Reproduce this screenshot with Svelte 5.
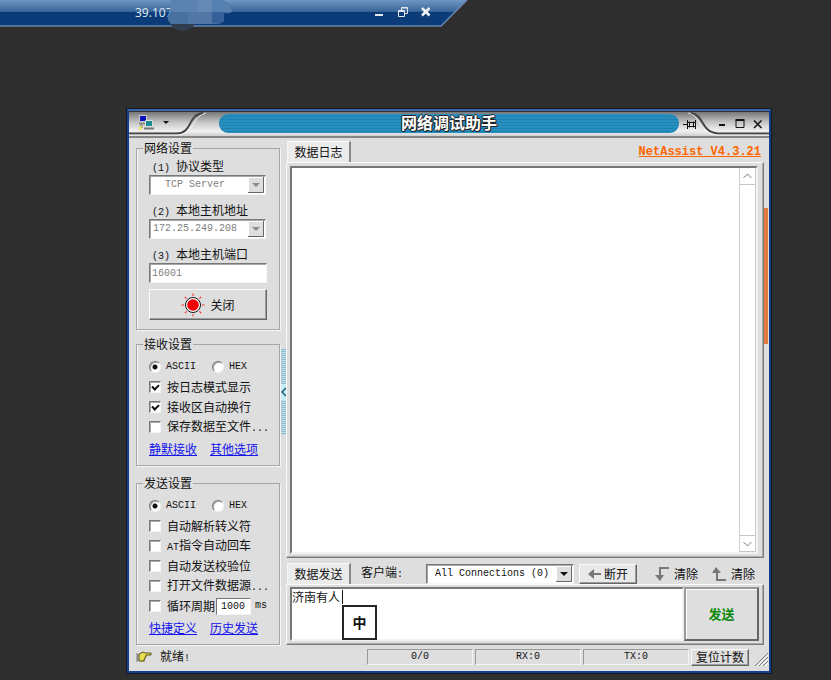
<script>
  let proto = $state('tcp-server');
  let host = $state('local');
  let port = $state('16001');
  let recvMode = $state('ASCII');
  let sendMode = $state('ASCII');
  let period = $state('1000');
  let log = $state('');
  let message = $state('济南有人');
  let recvOptions = $state([
    { label: '按日志模式显示', on: true },
    { label: '接收区自动换行', on: true },
    { label: '保存数据至文件', more: true, on: false }
  ]);
  let sendOptions = $state([
    { label: '自动解析转义符', on: false },
    { prefix: 'AT', label: '指令自动回车', on: false },
    { label: '自动发送校验位', on: false },
    { label: '打开文件数据源', more: true, on: false }
  ]);
  let loop = $state(false);
  const counters = ['0/0', 'RX:0', 'TX:0'];
  const rays = [0, 45, 90, 135, 180, 225, 270, 315];
</script>

{#snippet modes(name, value, pick)}
  <div class="row">
    <label class="radio"><input type="radio" {name} checked={value === 'ASCII'} onchange={() => pick('ASCII')} /><span class="m">ASCII</span></label>
    <label class="radio"><input type="radio" {name} checked={value === 'HEX'} onchange={() => pick('HEX')} /><span class="m">HEX</span></label>
  </div>
{/snippet}

{#snippet checks(items)}
  {#each items as item}
    <label class="row"><input type="checkbox" bind:checked={item.on} /><span>{#if item.prefix}<span class="m">{item.prefix}</span>{/if}{item.label}{#if item.more}<span class="m">...</span>{/if}</span></label>
  {/each}
{/snippet}

{#snippet arrow()}
  <svg class="drop" width="16" height="16" viewBox="0 0 16 16" aria-hidden="true">
    <path class="face" d="M0 0h16v16H0z" /><path class="lo" d="M15.500 0V15.500H0" /><path class="hi" d="M.5 15V.5H15" />
    <path class="tri" d="M4 6h8l-4 4z" />
  </svg>
{/snippet}

<div class="desktop">
  <header class="remote">
    <svg class="shape" width="468" height="30" viewBox="0 0 468 30" aria-hidden="true">
      <defs>
        <linearGradient id="glass" x1="0" y1="0" x2="0" y2="1">
          <stop offset="0" stop-color="#6f97c4" /><stop offset="1" stop-color="#366497" />
        </linearGradient>
      </defs>
      <path d="M0 0H467L441 26H0z" fill="#0b3b78" />
      <path d="M0 0H467L455 12H0z" fill="url(#glass)" />
      <path d="M467 0L441 26H0" fill="none" stroke="#6687ad" stroke-width="1.500" />
    </svg>
    <span class="addr">39.107</span>
    <svg class="smudge" width="70" height="32" viewBox="0 0 70 32" aria-hidden="true">
      <path d="M3 23h26q-6 8-14 8q-9-1-12-8z" fill="#303d4f" />
      <path d="M4 0h52q7 4 9 9q2 5-8 4v7q-1 4-8 4H4q-7-6 0-13z" fill="#49719f" />
      <path d="M4 0h26v12H3z" fill="#5b82b0" /><path d="M30 0h15v12H30z" fill="#6489b4" />
      <path d="M21 12h24v12H21z" fill="#5277a5" /><path d="M45 0h11q7 4 9 12H45z" fill="#5580b0" />
      <path d="M45 12h12v8q-1 3-6 3h-6z" fill="#36609a" />
    </svg>
    <div class="remote-buttons">
      <button aria-label="最小化"><svg width="12" height="12"><path d="M2 9h8" stroke="#e4e9f0" stroke-width="2" /></svg></button>
      <button aria-label="还原"><svg width="12" height="12"><path d="M4.500 4V1.500H10.500V7.500H8M1.500 4.500h6v6h-6zM1.500 5.500h6M4.500 2h6" fill="none" stroke="#e4e9f0" /></svg></button>
      <button aria-label="关闭"><svg width="12" height="12"><path d="M1 2l7.500 7.500M8.500 2L1 9.500" stroke="#eef2f7" stroke-width="2.500" /></svg></button>
    </div>
  </header>

  <main class="window">
    <div class="titlebar">
      <svg class="cap" width="90" height="25" viewBox="0 0 90 25" aria-hidden="true">
        <path d="M0 21.500H48C64 21 58 3 74 1" fill="none" stroke="#444" stroke-width="2" />
        <path d="M0 23H49C66 22 62 5 77 1" fill="none" stroke="#fff" stroke-opacity=".7" />
        <path d="M10.500 3.500h7v6h-7z" fill="#0712b8" stroke="#ccc" /><path d="M10 11.500h6M12.500 12v4" stroke="#8d8d8d" stroke-width="2" />
        <path d="M16.500 8.500h7v6h-7z" fill="#188a91" stroke="#ddd" /><path d="M15 16.500h10" stroke="#777" stroke-width="2" />
        <path d="M13 14l-3 2h3l-3 3" fill="none" stroke="#eded2b" />
        <path d="M34 9h6l-3 3z" fill="#111" />
      </svg>
      <h1>网络调试助手</h1>
      <div class="cap caps">
        <svg class="curve" width="90" height="25" viewBox="0 0 90 25" aria-hidden="true">
          <path d="M12 1C26 3 21 20 39 21.500H90" fill="none" stroke="#444" stroke-width="2" />
          <path d="M9 1C23 4 18 21 38 23H90" fill="none" stroke="#fff" stroke-opacity=".7" />
        </svg>
        <button aria-label="置顶"><svg width="14" height="14"><path d="M0 7.500h4M4.500 3v9M12.500 3v9" stroke="#111" /><path d="M6.500 4.500v6M10.500 4.500v6M5 5.500h1.500h4H12M5 9.500h7" fill="none" stroke="#111" /></svg></button>
        <button class="first" aria-label="最小化"><svg width="12" height="14"><path d="M3 8h6" stroke="#111" stroke-width="2" /></svg></button>
        <button aria-label="最大化"><svg width="12" height="14"><path d="M2 3.500h8v7h-8z" fill="none" stroke="#111" /><path d="M1.500 3h9" stroke="#111" stroke-width="2" /></svg></button>
        <button aria-label="关闭"><svg width="12" height="14"><path d="M2 3.500l7.500 7.500M9.500 3.500L2 11" stroke="#111" stroke-width="1.500" /></svg></button>
      </div>
    </div>

    <div class="body">
      <aside>
        <fieldset>
          <legend>网络设置</legend>
          <label class="cap-label" for="proto"><span class="m num">(1)</span>协议类型</label>
          <div class="combo"><select id="proto" class="indent" bind:value={proto} disabled><option value="tcp-server">TCP Server</option></select>{@render arrow()}</div>
          <label class="cap-label" for="host"><span class="m num">(2)</span>本地主机地址</label>
          <div class="combo"><select id="host" bind:value={host} disabled><option value="local">172.25.249.208</option></select>{@render arrow()}</div>
          <label class="cap-label" for="port"><span class="m num">(3)</span>本地主机端口</label>
          <input id="port" class="port" bind:value={port} disabled />
          <button class="raised toggle">
            <svg width="24" height="24" viewBox="-12 -12 24 24" aria-hidden="true">
              {#each rays as a}<path d="M9 0h2.500" stroke="#f22" transform={`rotate(${a})`} />{/each}
              <circle r="7.500" fill="#fff" stroke="#111" /><circle r="5.800" fill="#f00000" />
            </svg>
            关闭
          </button>
        </fieldset>

        <fieldset class="opts">
          <legend>接收设置</legend>
          {@render modes('recv', recvMode, (v) => (recvMode = v))}
          {@render checks(recvOptions)}
          <div class="links"><a href="#quiet">静默接收</a><a href="#other">其他选项</a></div>
        </fieldset>

        <fieldset class="opts last">
          <legend>发送设置</legend>
          {@render modes('send', sendMode, (v) => (sendMode = v))}
          {@render checks(sendOptions)}
          <div class="row">
            <label class="loop"><input type="checkbox" bind:checked={loop} /><span>循环周期</span></label>
            <input class="period" aria-label="循环周期毫秒" bind:value={period} /><span class="m">ms</span>
          </div>
          <div class="links"><a href="#quick">快捷定义</a><a href="#history">历史发送</a></div>
        </fieldset>
      </aside>

      <div class="splitter"><button aria-label="收起侧栏"><svg width="6" height="16"><path d="M5 4L1 8l4 4" fill="none" stroke="#165a70" stroke-width="1.500" /></svg></button></div>

      <section class="work">
        <div class="tabs">
          <button class="tab">数据日志</button>
          <a class="brand" href="#about">NetAssist V4.3.21</a>
        </div>
        <div class="panel grow">
          <div class="sunken log">
            <textarea aria-label="数据日志" readonly bind:value={log}></textarea>
            <div class="scroll">
              <button aria-label="向上滚动"><svg width="9" height="6"><path d="M.5 5l4-4 4 4" fill="none" stroke="#777" /></svg></button>
              <button aria-label="向下滚动"><svg width="9" height="6"><path d="M.5 1l4 4 4-4" fill="none" stroke="#777" /></svg></button>
            </div>
          </div>
        </div>

        <div class="tabs send-tabs">
          <button class="tab">数据发送</button>
          <label class="client" for="client">客户端<span class="m">:</span></label>
          <div class="combo wide"><select id="client"><option>All Connections (0)</option></select>{@render arrow()}</div>
          <button class="raised cut"><svg width="14" height="10"><path d="M0 5l6-5v4h7v2H6v4z" fill="#777" /></svg>断开</button>
          <button class="flat"><svg width="16" height="16"><path d="M15 2H6V9" fill="none" stroke="#777" stroke-width="2" /><path d="M1 9h9l-4 6z" fill="#777" /></svg>清除</button>
          <button class="flat"><svg width="16" height="16"><path d="M15 14H6V7" fill="none" stroke="#777" stroke-width="2" /><path d="M1 7h9l-5-6z" fill="#777" /></svg>清除</button>
        </div>
        <div class="panel send">
          <div class="sunken editor">
            <textarea aria-label="发送内容" bind:value={message}></textarea>
            <i class="caret"></i>
            <div class="ime">中</div>
          </div>
          <button class="raised go">发送</button>
        </div>
      </section>

      <div class="edge"></div>
    </div>

    <footer>
      <div class="ready">
        <svg width="16" height="14" viewBox="0 0 16 14" aria-hidden="true"><path d="M3 4l4-2 2 1h6v2h-5v2H9v2H8v2H3z" fill="#e6df55" stroke="#55520f" /><path d="M1 3v9M2 4v7" stroke="#777" /><path d="M5 11h4" stroke="#8b8b28" /></svg>
        <span>就绪<span class="m">!</span></span>
      </div>
      {#each counters as c}<div class="cell m">{c}</div>{/each}
      <button class="raised reset">复位计数</button>
      <svg class="grip" width="14" height="14"><path d="M1 14L14 1M5 14l9-9M9 14l5-5" stroke="#777" /><path d="M3 14L14 3M7 14l7-7M11 14l3-3" stroke="#fff" /></svg>
    </footer>
  </main>
</div>

<style>
  :global(body) { background: #2e2e2e; }
  .desktop {
    min-height: 100vh; box-sizing: border-box; padding-bottom: 7px;
    display: flex; flex-direction: column; background: #2e2e2e; color: #111;
    font: 12px/14px "Noto Sans CJK SC", sans-serif;
  }
  .desktop :is(button, input, select, textarea) {
    font: inherit; color: inherit; margin: 0; padding: 0; border: 0; border-radius: 0;
    background: none; box-sizing: border-box; outline: none;
  }
  .desktop svg { display: block; flex: none; }
  .desktop .m, .desktop select, .desktop .port, .desktop .period { font-family: "Liberation Mono", monospace; font-size: 10px; }
  .num { margin: 0 6px 0 3px; }

  .remote { position: relative; height: 109px; width: 468px; box-sizing: border-box; padding-left: 135px; }
  .shape { position: absolute; left: 0; top: 0; }
  .addr { position: relative; color: #dfe5ee; font: 12px/26px "Noto Sans", sans-serif; }
  .smudge { position: absolute; left: 167px; top: 0; }
  .remote-buttons { position: absolute; left: 373px; top: 6px; display: flex; gap: 12px; }
  .remote-buttons button { height: 12px; }

  .window {
    flex: 1; margin: 0 60px 0 127px; display: flex; flex-direction: column;
    border: 2px solid #153f8c; border-top-color: #3c64a8; box-shadow: 0 0 0 1px #15181f;
    background: #dedede;
  }
  .titlebar {
    display: flex; height: 24px; border-top: 1px solid #333; border-bottom: 2px solid #858585;
    background: linear-gradient(#777, #c9c9c9 45%, #f1f1f1 80%, #cfcfcf);
  }
  .cap { flex: none; width: 90px; }
  h1 {
    flex: 1; margin: 2px 0 3px; border-radius: 9px; text-align: center; color: #fff;
    font: bold 16px/17px "Noto Sans CJK SC", sans-serif;
    text-shadow: 1px 0 #222, -1px 0 #222, 0 1px #222, 0 -1px #222, 1px 1px #222;
    background: repeating-linear-gradient(#278fc0 0 2px, #1f82b2 2px 3px);
  }
  .caps { position: relative; display: flex; align-items: center; justify-content: flex-end; gap: 6px; box-sizing: border-box; padding-right: 5px; }
  .caps button { position: relative; }
  .caps .first { margin-left: 13px; }
  .curve { position: absolute; left: 0; top: 0; }

  .body { flex: 1; display: flex; padding-top: 3px; }
  aside { flex: none; width: 144px; margin: 0 1px 0 7px; }
  fieldset { margin: 0 0 7px; padding: 0 12px 9px; border: 1px solid #a6a6a6; box-shadow: inset 1px 0 #f6f6f6, 1px 1px #f6f6f6; min-width: 0; }
  legend { margin-left: -6px; padding: 0 1px; line-height: 14px; }
  .opts { padding: 6px 0 4px 12px; margin-bottom: 10px; }
  .last { margin-bottom: 0; }
  .cap-label { display: block; line-height: 18px; height: 18px; margin-top: 6px; }
  legend + .cap-label { margin-top: 2px; }

  .combo { display: grid; width: 117px; height: 20px; box-sizing: border-box; border: 1px solid; border-color: #777 #f8f8f8 #f8f8f8 #777; box-shadow: inset 1px 1px #a8a8a8; background: #fff; align-items: center; }
  .combo > :global(*) { grid-area: 1 / 1; }
  .combo select { appearance: none; width: 100%; height: 18px; padding-left: 3px; color: #111; opacity: 1; }
  .combo select:disabled { color: #808080; }
  .combo .indent { padding-left: 15px; }
  .drop { justify-self: end; margin-right: 1px; pointer-events: none; }
  .face { fill: #dedede; }
  .lo { fill: none; stroke: #666; }
  .hi { fill: none; stroke: #fff; }
  .tri { fill: #111; }
  select:disabled + .drop .tri { fill: #8a8a8a; }
  .desktop .port { display: block; width: 118px; height: 20px; padding-left: 2px; color: #808080; background: #fff; border: 1px solid; border-color: #777 #f8f8f8 #f8f8f8 #777; box-shadow: inset 1px 1px #a8a8a8; }
  .desktop .raised { background: #dedede; border: 1px solid; border-color: #fafafa #666 #666 #fafafa; box-shadow: inset -1px -1px #9c9c9c; }
  .desktop .toggle { display: flex; align-items: center; justify-content: center; gap: 5px; width: 118px; height: 31px; margin-top: 6px; }

  .row { display: flex; align-items: center; height: 20px; white-space: nowrap; }
  .radio, .loop { display: flex; align-items: center; }
  .radio { width: 63px; flex: none; }
  .desktop input[type='radio'], .desktop input[type='checkbox'] { appearance: none; flex: none; width: 12px; height: 12px; border: 1px solid; border-color: #777 #f4f4f4 #f4f4f4 #777; box-shadow: inset 1px 1px #aaa; background: #fff; margin-right: 6px; }
  .desktop input[type='radio'] { border-radius: 50%; margin-right: 5px; }
  .desktop input[type='radio']:checked { background: radial-gradient(circle, #111 0 2px, #fff 3px); }
  input[type='checkbox']:checked::before { content: ''; display: block; width: 7px; height: 5px; margin: 2px 0 0 2px; border: solid #111; border-width: 0 0 2px 2px; box-sizing: border-box; transform: rotate(-45deg); }
  .desktop .period { width: 35px; height: 17px; margin: 0 4px 0 1px; padding-left: 4px; background: #fff; border: 1px solid; border-color: #777 #f4f4f4 #f4f4f4 #777; }
  .links { display: flex; gap: 13px; line-height: 24px; height: 24px; }
  .links a { color: #1414ee; }

  .splitter { flex: none; width: 5px; height: 86px; margin-top: 208px; display: flex; align-items: center; background: repeating-linear-gradient(#8ebccb 0 1px, #c3e1ea 1px 2px); }
  .desktop .splitter button { background: #c5edf7; }

  .work { flex: 1; min-width: 0; display: flex; flex-direction: column; }
  .tabs { display: flex; height: 21px; padding-left: 1px; align-items: center; }
  .desktop .tab { height: 21px; width: 64px; background: #ebebeb; border: 1px solid #f8f8f8; border-right: 2px solid #888; border-bottom: 0; }
  .desktop .brand { margin-left: auto; margin-right: 3px; color: #f60; font: bold 12px/18px "Liberation Mono", monospace; text-decoration: underline; }
  .panel { display: flex; padding: 3px 5px 3px 3px; border: 1px solid; border-color: #fafafa #7b7b7b #7b7b7b #fafafa; box-shadow: inset -1px -1px #aaa; background: #dedede; }
  .grow { flex: 1; min-height: 0; }
  .sunken { display: flex; background: #fff; border: 2px solid; border-color: #777 #f2f2f2 #f2f2f2 #777; }
  .log { flex: 1; }
  .desktop textarea { flex: 1; min-width: 0; resize: none; background: #fff; }
  .scroll { width: 17px; display: flex; flex-direction: column; justify-content: space-between; border: solid #cdcdcd; border-width: 0 1px; box-sizing: border-box; background: #fff; }
  .desktop .scroll button { height: 17px; display: flex; align-items: center; justify-content: center; border-bottom: 1px solid #c7c7c7; }
  .desktop .scroll button:last-child { border-top: 1px solid #c7c7c7; }
  .send-tabs { margin-top: 5px; }
  .client { margin-left: 10px; flex: 1; white-space: nowrap; }
  .wide { width: 148px; }
  .wide select { padding-left: 8px; }
  .desktop .cut { display: flex; align-items: center; justify-content: center; gap: 2px; width: 58px; height: 20px; margin: 0 17px 0 5px; background: #e9e9e9; }
  .desktop .flat { display: flex; align-items: center; gap: 4px; margin-right: 13px; }
  .desktop .flat:last-child { margin-right: 9px; }
  .send { height: 54px; padding: 2px 4px 3px 3px; }
  .editor { flex: 1; position: relative; }
  .editor textarea { line-height: 16px; }
  .caret { position: absolute; left: 50px; top: 1px; width: 1px; height: 14px; background: #111; }
  .ime { position: absolute; left: 50px; top: 16px; width: 31px; height: 31px; border: 2px solid #262626; background: #fff; text-align: center; font-weight: bold; font-size: 14px; line-height: 31px; }
  .desktop .go { width: 75px; color: #0a8a0a; font-weight: bold; font-size: 13px; border-width: 2px; border-color: #999 #666 #666 #999; box-shadow: inset 1px 1px #fff; }
  .edge { width: 4px; height: 136px; margin: 67px 1px 0 0; background: #df7b3d; }

  footer { display: flex; align-items: center; height: 18px; margin: 3px 0 5px 7px; }
  .ready { flex: none; width: 229px; display: flex; align-items: center; gap: 8px; }
  .cell { flex: 1; height: 16px; box-sizing: border-box; margin-left: 2px; line-height: 14px; text-align: center; border: 1px solid; border-color: #999 #f5f5f5 #f5f5f5 #999; }
  .desktop .reset { width: 58px; height: 17px; margin: 0 5px 0 2px; line-height: 14px; }
  .grip { align-self: flex-end; margin-right: 1px; }
</style>
